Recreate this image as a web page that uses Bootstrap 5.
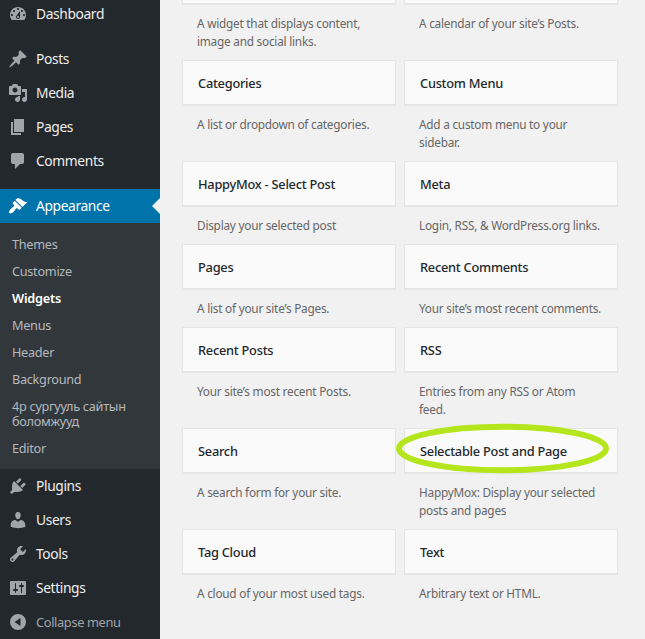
<!DOCTYPE html>
<html lang="en">
<head>
<meta charset="utf-8">
<meta name="viewport" content="width=device-width, initial-scale=1">
<title>Widgets</title>
<link href="https://cdn.jsdelivr.net/npm/bootstrap@5.3.0/dist/css/bootstrap.min.css" rel="stylesheet">
<style>
body{background:#f1f1f1;font-family:"Noto Sans","Open Sans",sans-serif;font-size:13px;color:#23282d;height:639px;overflow:hidden}
.admin-side{width:160px;height:639px;background:#23282d;overflow:hidden}
.admin-menu{margin-top:-3px}
.admin-link{height:34px;padding:0 0 0 8px;gap:8px;color:#eee;font-size:13.8px;letter-spacing:-.38px;line-height:18px;white-space:nowrap}
.admin-link svg{width:20px;height:20px;fill:#a0a5aa;flex:none}
.gap-sep{margin-top:11px}
.admin-link.current{background:#0073aa;color:#fff}
.admin-link.current svg{fill:#fff}
.admin-link.current::after{content:"";margin-left:auto;border:8px solid transparent;border-right-color:#f1f1f1}
.admin-link.collapse-link{color:#a0a5aa;font-size:12.8px;letter-spacing:-.35px}
.admin-sub{background:#32373c;padding:8px 0 7px}
.admin-sub a{display:block;padding:6px 12px;line-height:15px;font-size:12.7px;letter-spacing:-.28px;color:#b4b9be}
.admin-sub a.on{color:#fff;font-weight:600;letter-spacing:-.2px}
.widget-grid{display:grid;grid-template-columns:214px 214px;column-gap:8px;margin:-41px 0 0 22px;align-content:start}
.widget-box{height:45px;padding:2px 15px 0;background:#fafafa;border:1px solid #e5e5e5;box-shadow:0 1px 1px rgba(0,0,0,.04);font-size:12.8px;font-weight:500;letter-spacing:-.25px}
.widget-desc{margin:0;padding:10px 10px 10px 15px;font-size:11.8px;line-height:18px;color:#666;letter-spacing:-.23px}
.ring{position:absolute;left:-9px;top:-6px;width:216px;height:52px}
</style>
<script src="https://cdn.jsdelivr.net/npm/bootstrap@5.3.0/dist/js/bootstrap.bundle.min.js"></script>
</head>
<body>
<div class="d-flex">
<nav class="admin-side flex-shrink-0">
<div class="admin-menu d-flex flex-column">
<a class="admin-link d-flex align-items-center text-decoration-none"><svg viewBox="0 0 20 20"><path d="M3.76 16h12.48c1.1-1.37 1.76-3.11 1.76-5 0-4.42-3.58-8-8-8s-8 3.58-8 8c0 1.89.66 3.63 1.76 5zM10 4c.55 0 1 .45 1 1s-.45 1-1 1-1-.45-1-1 .45-1 1-1zM6 6c.55 0 1 .45 1 1s-.45 1-1 1-1-.45-1-1 .45-1 1-1zm8 0c.55 0 1 .45 1 1s-.45 1-1 1-1-.45-1-1 .45-1 1-1zm-5.370 5.550L12 7v6c0 1.100-.9 2-2 2s-2-.9-2-2c0-.57.24-1.080.63-1.450zM4 10c.55 0 1 .45 1 1s-.45 1-1 1-1-.45-1-1 .45-1 1-1zm12 0c.55 0 1 .45 1 1s-.45 1-1 1-1-.45-1-1 .45-1 1-1zm-5 3c0-.55-.45-1-1-1s-1 .45-1 1 .45 1 1 1 1-.45 1-1z"/></svg><span>Dashboard</span></a>
<a class="admin-link gap-sep d-flex align-items-center text-decoration-none"><svg viewBox="0 0 20 20"><path d="M10.440 3.020l1.820-1.820 6.360 6.350-1.830 1.820c-1.050-.68-2.480-.57-3.410.36l-.75.75c-.92.93-1.040 2.350-.35 3.410l-1.830 1.820-2.410-2.410-2.800 2.790c-.42.42-3.380 2.710-3.800 2.290s1.860-3.390 2.280-3.810l2.790-2.790L4.100 9.360l1.830-1.820c1.050.69 2.480.57 3.400-.36l.75-.75c.93-.92 1.050-2.350.36-3.410z"/></svg><span>Posts</span></a>
<a class="admin-link d-flex align-items-center text-decoration-none"><svg viewBox="0 0 20 20"><path d="M13 11V4c0-.55-.45-1-1-1h-1.670L9 1H5L3.670 3H2c-.55 0-1 .45-1 1v7c0 .55.45 1 1 1h10c.55 0 1-.45 1-1zM7 4.500c1.380 0 2.500 1.120 2.500 2.500S8.380 9.500 7 9.500 4.500 8.380 4.500 7 5.620 4.500 7 4.500zM14 6h5v10.500c0 1.380-1.120 2.500-2.500 2.500S14 17.880 14 16.500s1.120-2.500 2.500-2.500c.17 0 .34.02.5.05V9h-3V6zm-4 8.050V13h2v3.500c0 1.380-1.120 2.500-2.500 2.500S7 17.880 7 16.500 8.120 14 9.500 14c.17 0 .34.02.5.05z"/></svg><span>Media</span></a>
<a class="admin-link d-flex align-items-center text-decoration-none"><svg viewBox="0 0 20 20"><path d="M6 15V2h10v13H6zm-1 1h8v2H3V5h2v11z"/></svg><span>Pages</span></a>
<a class="admin-link d-flex align-items-center text-decoration-none"><svg viewBox="0 0 20 20"><path d="M5 2h9c1.100 0 2 .9 2 2v7c0 1.100-.9 2-2 2h-2l-5 5v-5H5c-1.100 0-2-.9-2-2V4c0-1.100.9-2 2-2z"/></svg><span>Comments</span></a>
<a class="admin-link current gap-sep d-flex align-items-center text-decoration-none"><svg viewBox="0 0 20 20"><path d="M14.480 11.060L7.410 3.990l1.500-1.500c.5-.56 2.300-.47 3.510.32 1.210.8 1.430 1.280 2.910 2.100 1.180.64 2.450 1.260 4.450.85zm-.71.71L6.700 4.700 4.930 6.470c-.39.39-.39 1.020 0 1.410l1.060 1.060c.39.39.39 1.030 0 1.420-.6.6-1.430 1.110-2.210 1.690-.35.26-.7.53-1.010.84C1.430 14.230.4 16.080 1.400 17.070c.99 1 2.840-.03 4.180-1.360.31-.31.58-.66.85-1.020.57-.78 1.080-1.610 1.690-2.210.39-.39 1.020-.39 1.410 0l1.060 1.060c.39.39 1.020.39 1.410 0z"/></svg><span>Appearance</span></a>
<div class="admin-sub">
<a class="text-decoration-none">Themes</a>
<a class="text-decoration-none">Customize</a>
<a class="on text-decoration-none">Widgets</a>
<a class="text-decoration-none">Menus</a>
<a class="text-decoration-none">Header</a>
<a class="text-decoration-none">Background</a>
<a class="text-decoration-none">4р сургууль сайтын<br>боломжууд</a>
<a class="text-decoration-none">Editor</a>
</div>
<a class="admin-link d-flex align-items-center text-decoration-none"><svg viewBox="0 0 20 20"><path d="M13.110 4.360L9.870 7.600 8 5.730l3.240-3.240c.35-.34 1.050-.2 1.560.32.52.51.66 1.210.31 1.550zm-8 1.770l.91-1.120 9.010 9.010-1.190.84c-.71.71-2.630 1.160-3.820 1.160H6.140L4.900 17.260c-.59.59-1.540.59-2.120 0-.59-.58-.59-1.530 0-2.120l1.240-1.240v-3.880c0-1.130.4-3.190 1.090-3.890zm7.260 3.970l3.240-3.240c.34-.35 1.040-.21 1.550.31.52.51.66 1.210.31 1.550l-3.240 3.250z"/></svg><span>Plugins</span></a>
<a class="admin-link d-flex align-items-center text-decoration-none"><svg viewBox="0 0 20 20"><path d="M10 9.250c-2.270 0-2.730-3.440-2.730-3.440C7 4.020 7.820 2 9.970 2c2.160 0 2.980 2.020 2.710 3.810 0 0-.41 3.440-2.680 3.440zM10 11.820L12.720 10c2.390 0 4.520 2.330 4.520 4.530v2.490s-3.650 1.130-7.240 1.130c-3.650 0-7.240-1.130-7.240-1.130v-2.490c0-2.250 1.940-4.480 4.470-4.480z"/></svg><span>Users</span></a>
<a class="admin-link d-flex align-items-center text-decoration-none"><svg viewBox="0 0 20 20"><path d="M16.680 9.770c-1.340 1.340-3.300 1.670-4.950.99l-5.410 6.520c-.99.99-2.590.99-3.580 0s-.99-2.590 0-3.570l6.520-5.420c-.68-1.650-.35-3.610.99-4.950 1.280-1.280 3.120-1.620 4.720-1.060l-2.890 2.890 2.820 2.820 2.860-2.870c.53 1.580.18 3.390-1.080 4.650zM3.810 16.210c.4.39 1.040.39 1.430 0 .4-.4.4-1.040 0-1.430-.39-.4-1.030-.4-1.430 0-.39.39-.39 1.030 0 1.430z"/></svg><span>Tools</span></a>
<a class="admin-link d-flex align-items-center text-decoration-none"><svg viewBox="0 0 20 20"><path d="M18 16V4c0-.55-.45-1-1-1H3c-.55 0-1 .45-1 1v12c0 .55.45 1 1 1h14c.55 0 1-.45 1-1zM8 11h1c.55 0 1 .45 1 1s-.45 1-1 1H8v1.500c0 .28-.22.5-.5.5s-.5-.22-.5-.5V13H6c-.55 0-1-.45-1-1s.45-1 1-1h1V5.500c0-.28.22-.5.5-.5s.5.22.5.5V11zm5-2h-1c-.55 0-1-.45-1-1s.45-1 1-1h1V5.500c0-.28.22-.5.5-.5s.5.22.5.5V7h1c.55 0 1 .45 1 1s-.45 1-1 1h-1v5.500c0 .28-.22.5-.5.5s-.5-.22-.5-.5V9z"/></svg><span>Settings</span></a>
<a class="admin-link collapse-link d-flex align-items-center text-decoration-none"><svg viewBox="0 0 20 20"><path fill-rule="evenodd" d="M10 2a8 8 0 1 1 0 16a8 8 0 0 1 0-16zM12.500 6v8L6.500 10z"/></svg><span>Collapse menu</span></a>
</div>
</nav>
<main class="widget-grid">
<section><div class="widget-box d-flex align-items-center"></div><p class="widget-desc">A widget that displays content,<br>image and social links.</p></section>
<section><div class="widget-box d-flex align-items-center"></div><p class="widget-desc">A calendar of your site’s Posts.</p></section>
<section><div class="widget-box d-flex align-items-center">Categories</div><p class="widget-desc">A list or dropdown of categories.</p></section>
<section><div class="widget-box d-flex align-items-center">Custom Menu</div><p class="widget-desc">Add a custom menu to your<br>sidebar.</p></section>
<section><div class="widget-box d-flex align-items-center">HappyMox - Select Post</div><p class="widget-desc">Display your selected post</p></section>
<section><div class="widget-box d-flex align-items-center">Meta</div><p class="widget-desc">Login, RSS, &amp; WordPress.org links.</p></section>
<section><div class="widget-box d-flex align-items-center">Pages</div><p class="widget-desc">A list of your site’s Pages.</p></section>
<section><div class="widget-box d-flex align-items-center">Recent Comments</div><p class="widget-desc">Your site’s most recent comments.</p></section>
<section><div class="widget-box d-flex align-items-center">Recent Posts</div><p class="widget-desc">Your site’s most recent Posts.</p></section>
<section><div class="widget-box d-flex align-items-center">RSS</div><p class="widget-desc">Entries from any RSS or Atom<br>feed.</p></section>
<section><div class="widget-box d-flex align-items-center">Search</div><p class="widget-desc">A search form for your site.</p></section>
<section class="position-relative"><div class="widget-box d-flex align-items-center">Selectable Post and Page</div><svg class="ring" viewBox="0 0 216 52"><ellipse cx="107.500" cy="26.500" rx="103.500" ry="21.800" fill="none" stroke="#b5e61d" stroke-width="6"/></svg><p class="widget-desc">HappyMox: Display your selected<br>posts and pages</p></section>
<section><div class="widget-box d-flex align-items-center">Tag Cloud</div><p class="widget-desc">A cloud of your most used tags.</p></section>
<section><div class="widget-box d-flex align-items-center">Text</div><p class="widget-desc">Arbitrary text or HTML.</p></section>
</main>
</div>
</body>
</html>
